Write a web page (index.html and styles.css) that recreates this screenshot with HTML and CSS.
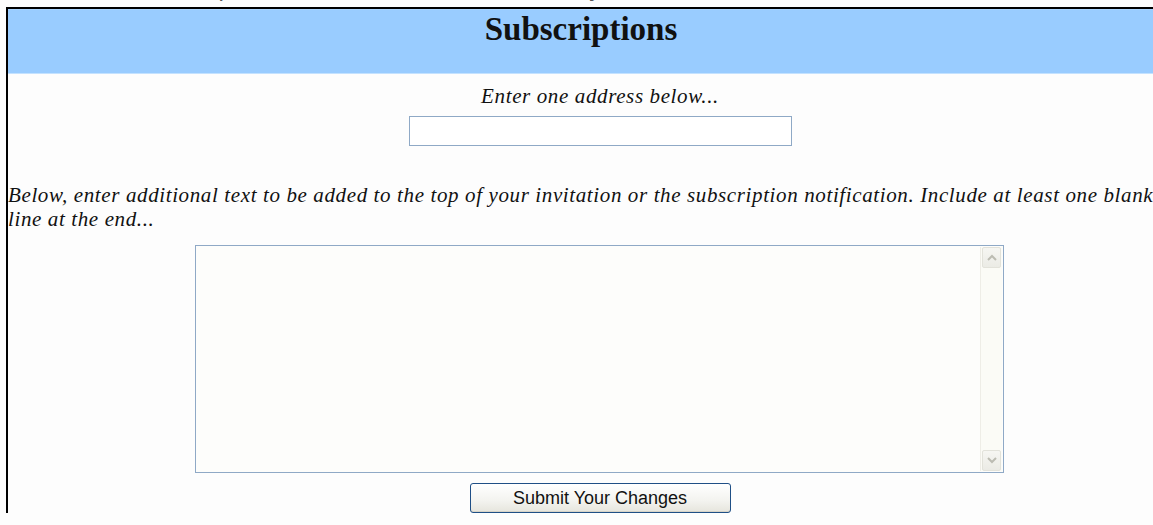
FILE: index.html
```html
<!DOCTYPE html>
<html lang="en">
<head>
<meta charset="utf-8">
<title>Subscriptions</title>
<link rel="stylesheet" href="styles.css">
</head>
<body>
<p class="lead">The User Subscriptions section of the form is where you can add new addresses to the list.</p>
<form class="panel">
  <h1 class="panel-title">Subscriptions</h1>
  <div class="panel-body">
    <p class="hint center">Enter one address below...</p>
    <div class="center">
      <input class="address" type="text">
    </div>
    <p class="hint para">Below, enter additional text to be added to the top of your invitation or the subscription notification. Include at least one blank line at the end...</p>
    <div class="notes">
      <textarea class="notes-text"></textarea>
      <div class="vscroll">
        <span class="vbtn">
          <svg width="10" height="7" viewBox="0 0 10 7"><path d="M1 6 L5 2 L9 6" fill="none" stroke="#bcbcb2" stroke-width="2"/></svg>
        </span>
        <span class="vtrack"></span>
        <span class="vbtn">
          <svg width="10" height="7" viewBox="0 0 10 7"><path d="M1 1 L5 5 L9 1" fill="none" stroke="#bcbcb2" stroke-width="2"/></svg>
        </span>
      </div>
    </div>
    <div class="center">
      <button class="submit" type="button">Submit Your Changes</button>
    </div>
  </div>
</form>
</body>
</html>
```

FILE: styles.css
```css
html, body {
  margin: 0;
  padding: 0;
  overflow: hidden;
  background: #fdfdfd;
}

body {
  font-family: "Liberation Serif", "Times New Roman", serif;
  color: #111;
}

/* running text of the page above the form; only its last pixels are in view */
.lead {
  margin: -26px 0 0 33px;
  font-family: "Liberation Sans", Arial, sans-serif;
  font-size: 24px;
  line-height: 28px;
  white-space: nowrap;
  color: #555;
}

.panel {
  margin: 5px 0 0 6px;
  width: 1184px;
  border: 2px solid #000;
  border-bottom: none;
}

.panel-title {
  margin: 0;
  height: 65px;
  box-sizing: border-box;
  padding: 1px 38px 0 0;
  background: #99ccff;
  border-top: 1px solid #a8d4ff;
  border-bottom: 1px solid #c4e2ff;
  text-align: center;
  font-size: 33px;
  font-weight: bold;
  line-height: 37px;
  color: #111;
}

.panel-body {
  padding-top: 10px;
  background: #fdfdfd;
}

.center {
  text-align: center;
}

.hint {
  margin: 0;
  font-style: italic;
  font-size: 21px;
  letter-spacing: 0.62px;
  line-height: 24px;
  color: #111;
}

.address {
  display: inline-block;
  box-sizing: border-box;
  width: 383px;
  height: 30px;
  margin: 8px 0 0 0;
  padding: 0;
  border: 1px solid #8fa9c6;
  background: #fff;
  vertical-align: top;
}

.para {
  margin-top: 37px;
  padding-right: 28px;
}

.notes {
  display: flex;
  box-sizing: border-box;
  width: 809px;
  height: 228px;
  margin: 14px 0 0 187px;
  border: 1px solid #8fa9c6;
  background: #fdfdfb;
}

.notes-text {
  flex: 1;
  border: none;
  margin: 0;
  padding: 0;
  resize: none;
  background: #fdfdfb;
  outline: none;
}

.vscroll {
  display: flex;
  flex-direction: column;
  width: 21px;
  margin: 1px 1px 1px 0;
  background: #fbfbf6;
  border-left: 1px solid #eeede6;
}

.vbtn {
  display: flex;
  align-items: center;
  justify-content: center;
  height: 19px;
  margin: 0 1px;
  border: 1px solid #e2e2da;
  border-radius: 2px;
  background: linear-gradient(#f6f6f2, #ebebe5);
}

.vtrack {
  flex: 1;
}

.submit {
  box-sizing: border-box;
  width: 261px;
  height: 30px;
  margin-top: 10px;
  padding: 0;
  border: 1px solid #1f4f86;
  border-radius: 3px;
  background: linear-gradient(#ffffff, #f3f3ef 60%, #e6e5dd);
  box-shadow: inset 0 -1px 0 #d6d3c8;
  font-family: "Liberation Sans", Arial, sans-serif;
  font-size: 18px;
  color: #111;
}
```
